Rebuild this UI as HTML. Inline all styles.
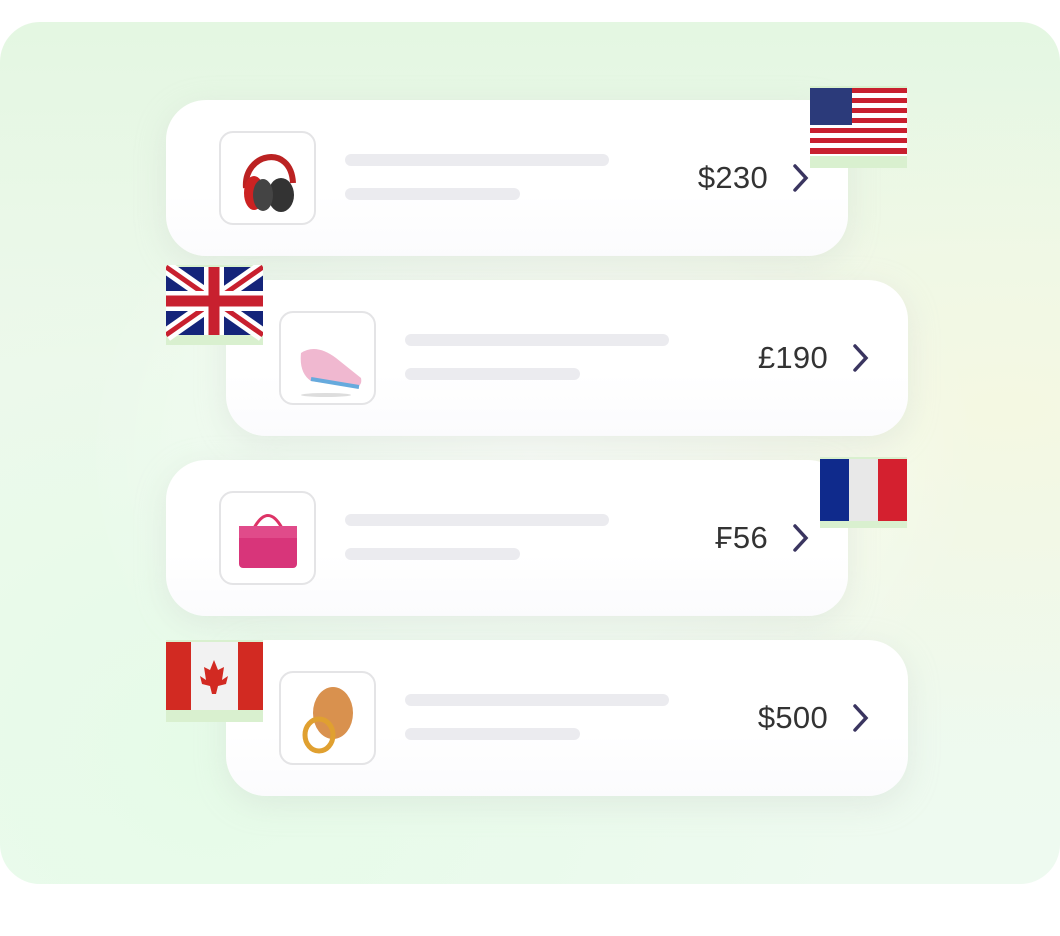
<!DOCTYPE html>
<html><head><meta charset="utf-8"><style>
body{margin:0;width:1060px;height:936px;background:#fff;position:relative;overflow:hidden;font-family:"Liberation Sans",sans-serif}
.panel{position:absolute;left:0;top:22px;width:1060px;height:862px;border-radius:40px;
background:radial-gradient(ellipse at 50% 50%,rgba(255,255,255,.7) 0%,rgba(255,255,255,0) 60%),radial-gradient(ellipse at 20% 85%,#e6fbe8 0%,rgba(230,251,232,0) 55%),radial-gradient(ellipse at 95% 45%,#f4f8e2 0%,rgba(244,248,226,0) 50%),linear-gradient(180deg,#e4f7e2 0%,#eef8ec 40%,#eefaf0 100%)}
.card{position:absolute;width:682px;height:156px;border-radius:40px;background:linear-gradient(#fff 60%,#fbfbfd);box-shadow:0 8px 30px rgba(200,210,200,.35)}
.th{position:absolute;left:53px;top:31px;width:93px;height:90px;border:2px solid #e4e4e6;border-radius:14px;background:#fff}
.b1{position:absolute;left:179px;top:54px;width:264px;height:12px;border-radius:6px;background:#ebebef}
.b2{position:absolute;left:179px;top:88px;width:175px;height:12px;border-radius:6px;background:#ebebef}
.pr{position:absolute;right:80px;top:60px;font-size:31px;color:#333;letter-spacing:.3px}
.ch{position:absolute;right:38px;top:63px}
.flag{position:absolute}
</style></head><body>
<div class="panel"></div>

<div class="card" style="left:166px;top:100px">
<div class="th"><svg width="94" height="91"><path d="M25 55 C22 20 70 10 72 50" fill="none" stroke="#b22" stroke-width="6"/><ellipse cx="33" cy="60" rx="10" ry="17" fill="#c22"/><ellipse cx="60" cy="62" rx="13" ry="17" fill="#333"/><ellipse cx="42" cy="62" rx="10" ry="16" fill="#444"/></svg></div>
<div class="b1"></div><div class="b2"></div><div class="pr">$230</div>
<svg class="ch" width="18" height="30"><path d="M3 3 L14 15 L3 27" fill="none" stroke="#3a3560" stroke-width="3.5" stroke-linecap="round"/></svg></div>

<div class="card" style="left:226px;top:280px">
<div class="th"><svg width="94" height="91"><path d="M20 40 Q35 30 55 45 L80 65 Q82 75 70 74 L30 68 Q18 60 20 40Z" fill="#f0b8d0"/><path d="M30 66 L78 74" stroke="#6ad" stroke-width="4"/><ellipse cx="45" cy="82" rx="25" ry="2" fill="#ddd"/></svg></div>
<div class="b1"></div><div class="b2"></div><div class="pr">£190</div>
<svg class="ch" width="18" height="30"><path d="M3 3 L14 15 L3 27" fill="none" stroke="#3a3560" stroke-width="3.5" stroke-linecap="round"/></svg></div>

<div class="card" style="left:166px;top:460px">
<div class="th"><svg width="94" height="91"><path d="M33 35 Q47 10 61 35" fill="none" stroke="#d36" stroke-width="3"/><rect x="18" y="33" width="58" height="42" rx="4" fill="#d8357a"/><rect x="18" y="33" width="58" height="12" fill="#e04b8a"/></svg></div>
<div class="b1"></div><div class="b2"></div><div class="pr">₣56</div>
<svg class="ch" width="18" height="30"><path d="M3 3 L14 15 L3 27" fill="none" stroke="#3a3560" stroke-width="3.5" stroke-linecap="round"/></svg></div>

<div class="card" style="left:226px;top:640px">
<div class="th"><svg width="94" height="91"><ellipse cx="52" cy="40" rx="20" ry="26" fill="#d9914e"/><ellipse cx="38" cy="62" rx="14" ry="16" fill="none" stroke="#e0a030" stroke-width="5"/></svg></div>
<div class="b1"></div><div class="b2"></div><div class="pr">$500</div>
<svg class="ch" width="18" height="30"><path d="M3 3 L14 15 L3 27" fill="none" stroke="#3a3560" stroke-width="3.5" stroke-linecap="round"/></svg></div>

<svg class="flag" style="left:810px;top:86px" width="97" height="82"><rect width="97" height="82" fill="#d9f0cf"/>
<g><rect x="0" y="2" width="97" height="68" fill="#fff"/>
<g fill="#c8202f"><rect y="2" width="97" height="5"/><rect y="12" width="97" height="5"/><rect y="22" width="97" height="5"/><rect y="32" width="97" height="5"/><rect y="42" width="97" height="5"/><rect y="52" width="97" height="5"/><rect y="62" width="97" height="6"/></g>
<rect x="0" y="2" width="42" height="37" fill="#2b3a7a"/></g></svg>

<svg class="flag" style="left:166px;top:265px" width="97" height="80"><rect width="97" height="80" fill="#d9f0cf"/><rect y="2" width="97" height="68" fill="#14247a"/>
<path d="M0 2 L97 70 M97 2 L0 70" stroke="#fff" stroke-width="14"/><path d="M0 2 L97 70 M97 2 L0 70" stroke="#c8202f" stroke-width="5"/>
<path d="M48 2 V70 M0 36 H97" stroke="#fff" stroke-width="20"/><path d="M48 2 V70 M0 36 H97" stroke="#c8202f" stroke-width="11"/></svg>

<svg class="flag" style="left:820px;top:457px" width="87" height="71"><rect width="87" height="71" fill="#d9f0cf"/><rect y="2" width="29" height="62" fill="#0f2a8c"/><rect x="29" y="2" width="29" height="62" fill="#e8e8e8"/><rect x="58" y="2" width="29" height="62" fill="#d4202f"/></svg>

<svg class="flag" style="left:166px;top:640px" width="97" height="82"><rect width="97" height="82" fill="#d9f0cf"/><rect y="2" width="25" height="68" fill="#d22a22"/><rect x="25" y="2" width="47" height="68" fill="#f2f2f2"/><rect x="72" y="2" width="25" height="68" fill="#d22a22"/>
<path d="M48 20 L52 30 L58 27 L56 40 L62 36 L60 44 L52 46 L50 54 L46 54 L44 46 L36 44 L34 36 L40 40 L38 27 L44 30Z" fill="#d22a22"/></svg>
</body></html>
